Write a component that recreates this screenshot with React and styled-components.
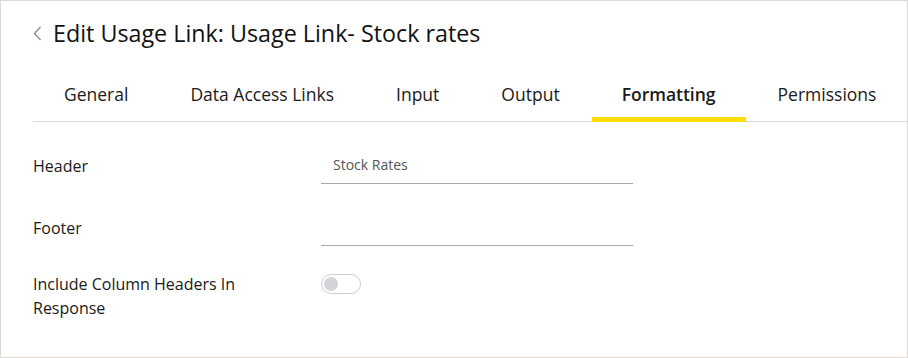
import React, { useState } from "react";
import styled, { createGlobalStyle } from "styled-components";

const Global = createGlobalStyle`
  html, body { margin: 0; padding: 0; background: #fff; }
  body { font-family: "Open Sans", "Noto Sans", sans-serif; color: #1a1a1a; }
  * { box-sizing: border-box; }
`;

const Frame = styled.div`
  width: 908px;
  height: 358px;
  border: 1px solid #ddd8d4;
  background: #fff;
  padding: 0 0 0 32px;
  overflow: hidden;
`;

const TitleRow = styled.div`
  display: flex;
  align-items: center;
  gap: 10px;
  height: 64px;
`;

const BackButton = styled.button`
  border: none;
  background: none;
  padding: 0;
  width: 10px;
  height: 16px;
  display: flex;
  align-items: center;
  cursor: pointer;
`;

const Title = styled.h1`
  margin: 0;
  font-size: 23.3px;
  font-weight: 500;
  color: #111;
  white-space: nowrap;
`;

const Tabs = styled.div`
  display: flex;
  height: 57px;
  border-bottom: 1px solid #d9d9d9;
`;

const Tab = styled.div`
  position: relative;
  flex-shrink: 0;
  white-space: nowrap;
  padding: 2px 31px 0;
  height: 56px;
  display: flex;
  align-items: center;
  font-size: 17.5px;
  font-weight: ${(p) => (p.$active ? 600 : 400)};
  color: #1a1a1a;
  cursor: pointer;
  &::after {
    content: "";
    display: ${(p) => (p.$active ? "block" : "none")};
    position: absolute;
    left: 1px;
    right: 1px;
    bottom: -1px;
    height: 5px;
    background: #ffdd00;
  }
`;

const Form = styled.div`
  display: grid;
  grid-template-columns: 288px 312px;
  padding-top: 23px;
`;

const Label = styled.div`
  font-size: 16px;
  line-height: 24px;
  color: #1a1a1a;
  padding-right: 40px;
  padding-top: ${(p) => p.$top ?? 9}px;
  height: ${(p) => p.$h || 62}px;
`;

const Field = styled.div`
  height: ${(p) => p.$h || 62}px;
`;

const Input = styled.input`
  width: 312px;
  height: 39px;
  border: none;
  border-bottom: 1px solid #a8a8a8;
  outline: none;
  padding: 0 12px;
  font-family: inherit;
  font-size: 14px;
  color: #555;
  background: transparent;
`;

const Toggle = styled.div`
  margin-top: 5px;
  width: 40px;
  height: 20px;
  border: 1px solid #cfcfcf;
  border-radius: 10px;
  padding: 2px;
  display: flex;
  align-items: center;
`;

const Knob = styled.div`
  width: 14px;
  height: 14px;
  border-radius: 50%;
  background: #d3d3d8;
`;

const tabs = ["General", "Data Access Links", "Input", "Output", "Formatting", "Permissions"];

export default function App() {
  const [active] = useState("Formatting");
  return (
    <>
      <Global />
      <Frame>
        <TitleRow>
          <BackButton aria-label="Back">
            <svg width="9" height="15" viewBox="0 0 9 15">
              <path d="M7.5 1 L1.5 7.5 L7.5 14" fill="none" stroke="#888" strokeWidth="1.3" />
            </svg>
          </BackButton>
          <Title>Edit Usage Link: Usage Link- Stock rates</Title>
        </TitleRow>
        <Tabs>
          {tabs.map((t) => (
            <Tab key={t} $active={t === active}>{t}</Tab>
          ))}
        </Tabs>
        <Form>
          <Label>Header</Label>
          <Field>
            <Input defaultValue="Stock Rates" />
          </Field>
          <Label>Footer</Label>
          <Field>
            <Input defaultValue="" />
          </Field>
          <Label $h={80} $top={3}>Include Column Headers In Response</Label>
          <Field $h={80}>
            <Toggle>
              <Knob />
            </Toggle>
          </Field>
        </Form>
      </Frame>
    </>
  );
}
